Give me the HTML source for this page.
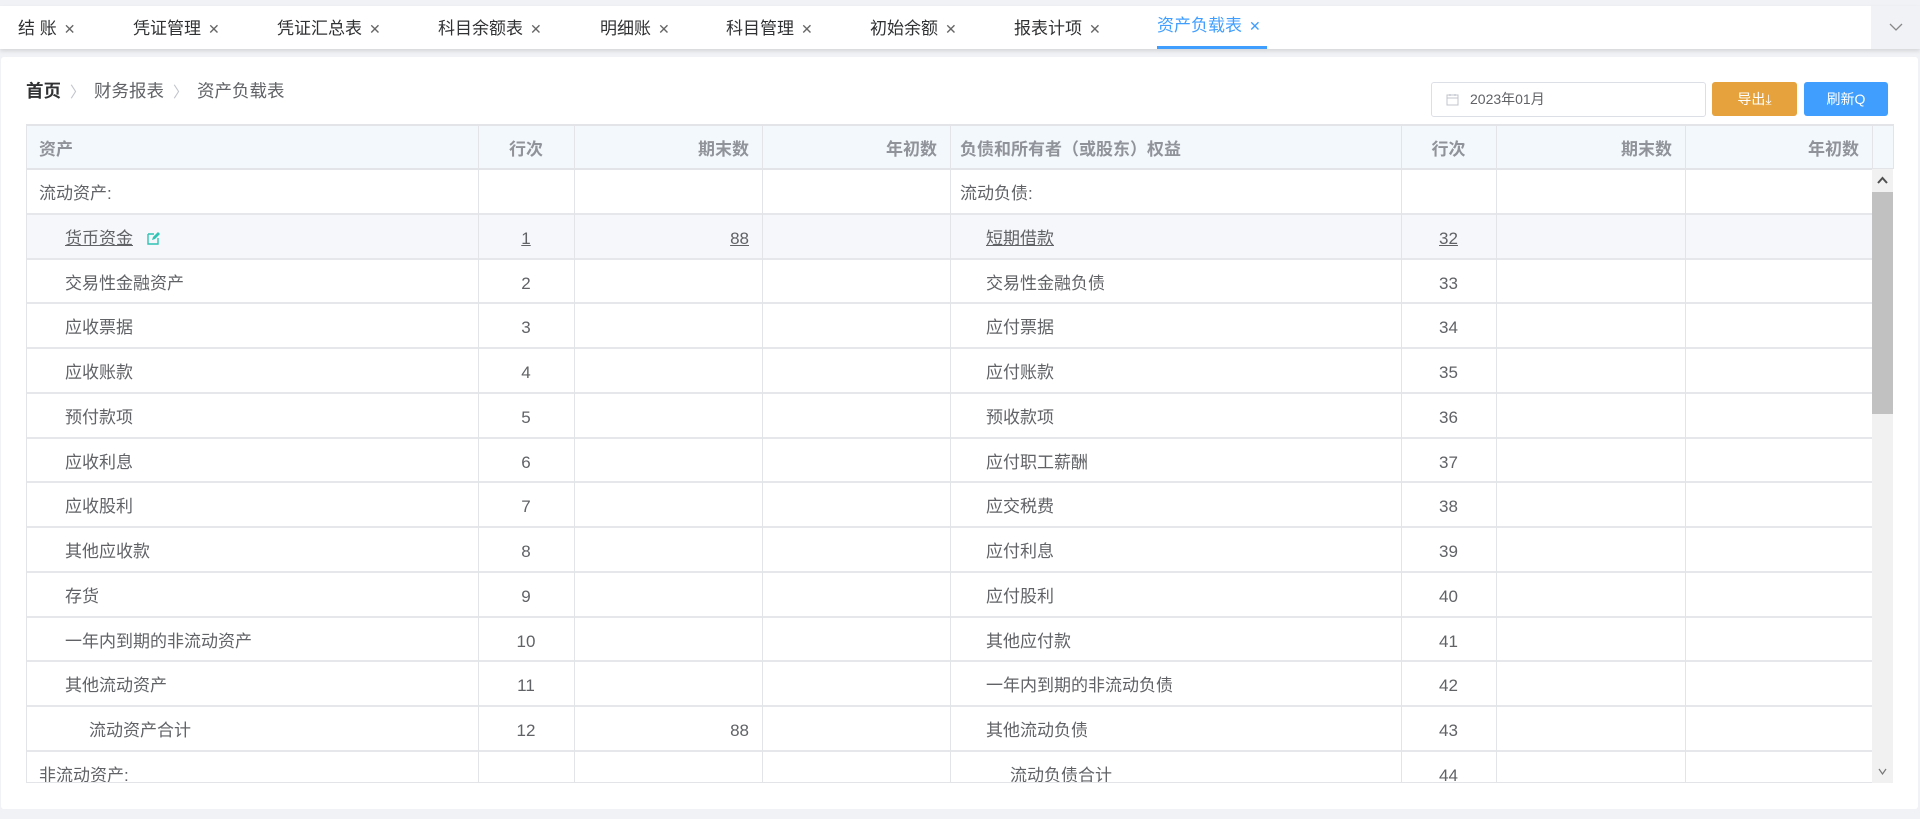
<!DOCTYPE html>
<html><head><meta charset="utf-8"><style>
*{margin:0;padding:0;box-sizing:border-box}
body{width:1920px;height:819px;background:#f0f2f5;font-family:"Liberation Sans","Noto Sans CJK SC",sans-serif;position:relative;overflow:hidden;color:#606266}
.abs{position:absolute}
#tabs{left:0;top:6px;width:1920px;height:43px;background:#fff;box-shadow:0 2px 4px rgba(0,0,0,.12)}
.tab{position:absolute;top:1px;height:42px;line-height:43px;font-size:17px;color:#303133;white-space:nowrap}
.tab span{font-size:14px;color:#666;margin-left:7px}
.tab.act{color:#409eff;border-bottom:3px solid #409eff;line-height:40px;top:0;height:43px}
.tab.act span{color:#409eff}
#chev{left:1871px;top:6px;width:49px;height:43px;background:#f0f2f5;text-align:center;line-height:43px;color:#888}
#card{left:1px;top:57px;width:1917px;height:752px;background:#fff;border-radius:3px}
.cell{position:absolute;font-size:17px;white-space:nowrap;overflow:hidden;padding-top:3px}
.hd{background:#f3f8fd;color:#909399;font-weight:bold}
.ln{position:absolute;background:#e3e4e8}
u{text-decoration:underline}
.bc{color:#c0c4cc;margin:0 9px;font-size:15px}
</style></head><body>
<div id="tabs" class="abs">
<div class="tab" style="left:18px">结 账<span>✕</span></div>
<div class="tab" style="left:133px">凭证管理<span>✕</span></div>
<div class="tab" style="left:277px">凭证汇总表<span>✕</span></div>
<div class="tab" style="left:438px">科目余额表<span>✕</span></div>
<div class="tab" style="left:600px">明细账<span>✕</span></div>
<div class="tab" style="left:726px">科目管理<span>✕</span></div>
<div class="tab" style="left:870px">初始余额<span>✕</span></div>
<div class="tab" style="left:1014px">报表计项<span>✕</span></div>
<div class="tab act" style="left:1157px;width:110px">资产负载表<span>✕</span></div>
</div>
<div id="chev" class="abs"><svg width="14" height="9" viewBox="0 0 14 9"><path d="M1 1l6 6 6-6" stroke="#888" fill="none" stroke-width="1.3"/></svg></div>
<div id="card" class="abs"></div>
<div class="abs" style="left:26px;top:79px;font-size:17.5px;line-height:24px;color:#606266"><b style="color:#303133">首页</b><span class="bc">〉</span>财务报表<span class="bc">〉</span>资产负载表</div>
<div class="abs" style="left:1431px;top:82px;width:275px;height:35px;border:1px solid #dcdfe6;border-radius:3px;font-size:14px;line-height:33px;color:#606266;padding-left:38px">2023年01月
<svg class="abs" style="left:14px;top:10px" width="13" height="13" viewBox="0 0 13 13"><rect x="1" y="2" width="11" height="10" fill="none" stroke="#c0c4cc"/><path d="M1 5h11M4 1v2M9 1v2" stroke="#c0c4cc"/></svg></div>
<div class="abs" style="left:1712px;top:82px;width:85px;height:34px;background:#e6a23c;border-radius:3px;color:#fff;font-size:14px;text-align:center;line-height:34px">导出⤓</div>
<div class="abs" style="left:1804px;top:82px;width:84px;height:34px;background:#409eff;border-radius:3px;color:#fff;font-size:14px;text-align:center;line-height:34px">刷新Q</div>
<div id="tbl"></div>
<script>
var L=26,R=1893,T=124,H=45,RH=44.75,B=783;
var cols=[26,478,574,762,950,1401,1496,1685,1872];
var out='';
out+='<div class="abs hd" style="left:'+L+'px;top:'+T+'px;width:'+(R-L)+'px;height:'+H+'px"></div>';
var left=[["流动资产:",0,"",""],["货币资金",1,"1","88"],["交易性金融资产",1,"2",""],["应收票据",1,"3",""],["应收账款",1,"4",""],["预付款项",1,"5",""],["应收利息",1,"6",""],["应收股利",1,"7",""],["其他应收款",1,"8",""],["存货",1,"9",""],["一年内到期的非流动资产",1,"10",""],["其他流动资产",1,"11",""],["流动资产合计",2,"12","88"],["非流动资产:",0,"",""]];
var right=[["流动负债:",0,""],["短期借款",1,"32"],["交易性金融负债",1,"33"],["应付票据",1,"34"],["应付账款",1,"35"],["预收款项",1,"36"],["应付职工薪酬",1,"37"],["应交税费",1,"38"],["应付利息",1,"39"],["应付股利",1,"40"],["其他应付款",1,"41"],["一年内到期的非流动负债",1,"42"],["其他流动负债",1,"43"],["流动负债合计",2,"44"]];
var y0=T+H;
out+='<div class="abs" style="left:'+L+'px;top:'+(y0+RH)+'px;width:'+(1872-L)+'px;height:'+RH+'px;background:#f5f7fa"></div>';
function c(x,y,w,txt,al,extra){return '<div class="cell" style="left:'+x+'px;top:'+y+'px;width:'+w+'px;height:'+RH+'px;line-height:'+RH+'px;text-align:'+al+';'+(extra||'')+'">'+txt+'</div>';}
for(var i=0;i<14;i++){
 var y=y0+i*RH;
 var a=left[i],b=right[i];
 var ind=[13,39,63][a[1]];
 var t=a[0]; if(i==1)t='<u>货币资金</u> <svg width="14" height="14" viewBox="0 0 14 14" style="margin-left:8px;vertical-align:-1px"><path d="M2 3h6M2 3v10h10V7" stroke="#2ec4b6" fill="none" stroke-width="1.4"/><path d="M6 9l1-3 5-5 2 2-5 5z" fill="#2ec4b6"/></svg>';
 out+=c(L,y,cols[1]-L,t,'left','padding-left:'+ind+'px');
 out+=c(cols[1],y,cols[2]-cols[1],i==1?'<u>1</u>':a[2],'center');
 out+=c(cols[2],y,cols[3]-cols[2],i==1?'<u>88</u>':a[3],'right','padding-right:13px');
 var ind2=[10,36,60][b[1]];
 out+=c(cols[4],y,cols[5]-cols[4],i==1?'<u>短期借款</u>':b[0],'left','padding-left:'+ind2+'px');
 out+=c(cols[5],y,cols[6]-cols[5],i==1?'<u>32</u>':b[2],'center');
 if(i>0) out+='<div class="ln" style="left:'+L+'px;top:'+(y-1)+'px;width:'+(1872-L)+'px;height:2px;background:#e6e7ea"></div>';
}
function h(x,w,txt,al,pad){return '<div class="cell hd" style="left:'+x+'px;top:'+T+'px;width:'+w+'px;height:'+H+'px;line-height:'+H+'px;text-align:'+al+';'+pad+'">'+txt+'</div>';}
out+=h(L+1,cols[1]-L-2,'资产','left','padding-left:12px');
out+=h(cols[1]+1,cols[2]-cols[1]-2,'行次','center','');
out+=h(cols[2]+1,cols[3]-cols[2]-2,'期末数','right','padding-right:12px');
out+=h(cols[3]+1,cols[4]-cols[3]-2,'年初数','right','padding-right:12px');
out+=h(cols[4]+1,cols[5]-cols[4]-2,'负债和所有者（或股东）权益','left','padding-left:9px');
out+=h(cols[5]+1,cols[6]-cols[5]-2,'行次','center','');
out+=h(cols[6]+1,cols[7]-cols[6]-2,'期末数','right','padding-right:12px');
out+=h(cols[7]+1,cols[8]-cols[7]-2,'年初数','right','padding-right:12px');
for(var k=0;k<cols.length;k++) out+='<div class="ln" style="left:'+cols[k]+'px;top:'+T+'px;width:1px;height:'+(B-T)+'px"></div>';
out+='<div class="ln" style="left:'+R+'px;top:'+T+'px;width:1px;height:'+H+'px"></div>';
out+='<div class="ln" style="left:'+L+'px;top:'+T+'px;width:'+(R-L)+'px;height:2px"></div>';
out+='<div class="ln" style="left:'+L+'px;top:'+(T+H-1)+'px;width:'+(R-L)+'px;height:2px"></div>';
out+='<div class="ln" style="left:'+L+'px;top:'+(B-1)+'px;width:'+(R-L)+'px;height:1px"></div>';
out+='<div class="abs" style="left:1872px;top:'+(T+H)+'px;width:21px;height:'+(B-T-H)+'px;background:#f1f1f1"></div>';
out+='<div class="abs" style="left:1872px;top:192px;width:21px;height:222px;background:#c1c1c1"></div>';
out+='<svg class="abs" style="left:1877px;top:176px" width="11" height="8" viewBox="0 0 11 8"><path d="M1 7l4.5-5 4.5 5" stroke="#505050" fill="none" stroke-width="2"/></svg>';
out+='<svg class="abs" style="left:1878px;top:768px" width="9" height="7" viewBox="0 0 9 7"><path d="M1 1l3.5 5 3.5-5" stroke="#777" fill="none" stroke-width="1.2"/></svg>';
document.getElementById('tbl').innerHTML=out;
</script>
</body></html>
